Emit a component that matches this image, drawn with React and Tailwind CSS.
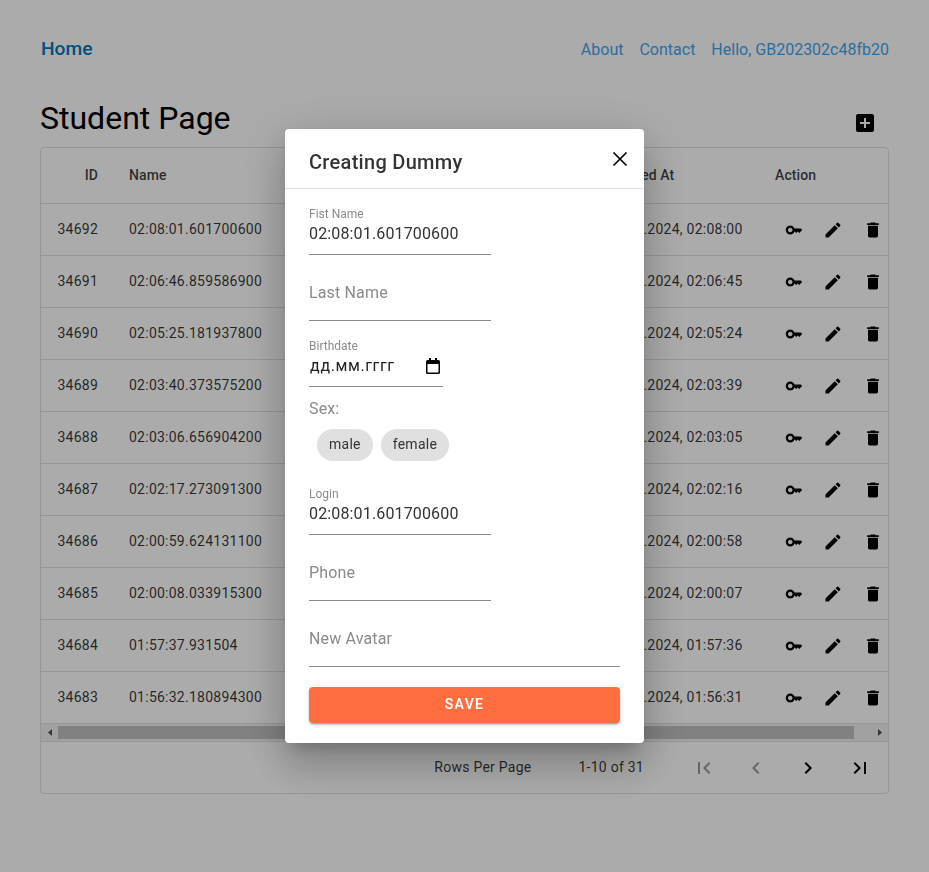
const font = { fontFamily: "Roboto, sans-serif" };

const rows = [
    ["34692", "02:08:01.601700600", "30.01.2024, 02:08:00"],
    ["34691", "02:06:46.859586900", "30.01.2024, 02:06:45"],
    ["34690", "02:05:25.181937800", "30.01.2024, 02:05:24"],
    ["34689", "02:03:40.373575200", "30.01.2024, 02:03:39"],
    ["34688", "02:03:06.656904200", "30.01.2024, 02:03:05"],
    ["34687", "02:02:17.273091300", "30.01.2024, 02:02:16"],
    ["34686", "02:00:59.624131100", "30.01.2024, 02:00:58"],
    ["34685", "02:00:08.033915300", "30.01.2024, 02:00:07"],
    ["34684", "01:57:37.931504", "30.01.2024, 01:57:36"],
    ["34683", "01:56:32.180894300", "30.01.2024, 01:56:31"],
];

const paths = {
    key: "M21 10h-8.35C11.83 7.67 9.61 6 7 6c-3.31 0-6 2.69-6 6s2.69 6 6 6c2.61 0 4.83-1.67 5.65-4H13l2 2 2-2 2 2 4-4.04L21 10zM7 15c-1.65 0-3-1.35-3-3s1.35-3 3-3 3 1.35 3 3-1.35 3-3 3z",
    edit: "M3 17.25V21h3.75L17.81 9.94l-3.75-3.75L3 17.25zM20.71 7.04c.39-.39.39-1.02 0-1.41l-2.34-2.34a.9959.9959 0 0 0-1.41 0l-1.83 1.83 3.75 3.75 1.83-1.83z",
    trash: "M6 19c0 1.1.9 2 2 2h8c1.1 0 2-.9 2-2V7H6v12zM19 4h-3.5l-1-1h-5l-1 1H5v2h14V4z",
    add: "M19 3H5c-1.11 0-2 .9-2 2v14c0 1.1.89 2 2 2h14c1.1 0 2-.9 2-2V5c0-1.1-.9-2-2-2zm-2 10h-4v4h-2v-4H7v-2h4V7h2v4h4v2z",
    first: "M18.41 16.59L13.82 12l4.59-4.59L17 6l-6 6 6 6zM6 6h2v12H6z",
    prev: "M15.41 7.41L14 6l-6 6 6 6 1.41-1.41L10.83 12z",
    next: "M10 6L8.59 7.41 13.17 12l-4.58 4.59L10 18l6-6z",
    last: "M5.59 7.41L10.18 12l-4.59 4.59L7 18l6-6-6-6zM16 6h2v12h-2z",
};

function Icon({ name, className }) {
    return (
        <svg viewBox="0 0 24 24" fill="currentColor" className={className}>
            <path d={paths[name]} />
        </svg>
    );
}

function ActionButton({ name, size = "w-5 h-5" }) {
    return (
        <button className="w-[39.5px] h-10 shrink-0 flex items-center justify-center text-black">
            <Icon name={name} className={size} />
        </button>
    );
}

function PageButton({ name, disabled }) {
    return (
        <button className={`w-[52px] h-10 flex items-center justify-center ${disabled ? "text-black/40" : "text-black"}`}>
            <Icon name={name} className="w-6 h-6" />
        </button>
    );
}

function StudentRow({ row }) {
    return (
        <div className="flex items-center h-[52px] pb-[2px] border-b border-[#e0e0e0] text-sm tracking-[0.25px] text-black/80">
            <div className="w-[72px] pr-[15px] text-right shrink-0">{row[0]}</div>
            <div className="pl-4 w-[478px] shrink-0">{row[1]}</div>
            <div className="pl-4 w-[168px] shrink-0 whitespace-nowrap">{row[2]}</div>
            <div className="flex pl-[14.75px] mt-[3px]">
                <ActionButton name="key" size="w-[18px] h-[18px]" />
                <ActionButton name="edit" />
                <ActionButton name="trash" />
            </div>
        </div>
    );
}

function Field({ label, value, placeholder, width = "w-[182px]" }) {
    return (
        <div className={`${width} h-[66px] border-b border-[#8c8c8c] ${label ? "pt-[17px]" : "pt-[26px]"}`}>
            {label && <div className="text-xs leading-4 text-[#8a8a8a]">{label}</div>}
            <input
                readOnly
                value={value || ""}
                placeholder={placeholder}
                className="block w-full h-6 text-base tracking-[0.15px] text-[#333] outline-none placeholder:text-[#8a8a8a] placeholder:opacity-100"
            />
        </div>
    );
}

function DateField() {
    return (
        <div className="w-[134px] h-[66px] border-b border-[#8c8c8c] pt-[17px]">
            <div className="text-xs leading-4 text-[#8a8a8a]">Birthdate</div>
            <div className="flex items-center justify-between h-6 pl-px pr-[3px]">
                <span className="text-base tracking-[0.6px] text-[#222]">дд.мм.гггг</span>
                <svg viewBox="0 0 14 16" className="w-[14px] h-4">
                    <path d="M3 0h2v2h4V0h2v2h1.5A1.5 1.5 0 0 1 14 3.500V14.500A1.500 1.500 0 0 1 12.500 16h-11A1.500 1.500 0 0 1 0 14.500V3.500A1.500 1.500 0 0 1 1.500 2H3zM1.500 6v8.500h11V6z" fill="#000" fillRule="evenodd" />
                </svg>
            </div>
        </div>
    );
}

function Chip({ label }) {
    return (
        <button className="h-8 px-3 pb-[2px] rounded-2xl bg-[#e0e0e0] text-sm tracking-[0.25px] text-[#333]">
            {label}
        </button>
    );
}

function CreateDialog() {
    return (
        <div className="fixed inset-0 z-10 flex items-center justify-center bg-black/33">
            <div className="w-[359px] h-[614px] bg-white rounded overflow-hidden shadow-[0_11px_15px_-7px_rgba(0,0,0,0.2),0_24px_38px_3px_rgba(0,0,0,0.14),0_9px_46px_8px_rgba(0,0,0,0.12)]">
                <div className="flex justify-between h-[60px] pl-6 pr-3 pt-[19px] border-b border-[#e0e0e0]">
                    <h2 className="text-xl leading-7 font-medium tracking-[0.3px] text-black/80">Creating Dummy</h2>
                    <button className="text-black h-6 -mt-[1px]">
                        <svg viewBox="0 0 24 24" className="w-6 h-6" fill="none" stroke="currentColor" strokeWidth="1.7">
                            <path d="M5.500 5.500l13 13M18.500 5.500l-13 13" />
                        </svg>
                    </button>
                </div>
                <div className="px-6">
                    <Field label="Fist Name" value="02:08:01.601700600" />
                    <Field placeholder="Last Name" />
                    <DateField />
                    <div className="pt-[10px] text-base leading-6 tracking-[0.15px] text-[#8a8a8a]">Sex:</div>
                    <div className="flex gap-2 mt-2 ml-2">
                        <Chip label="male" />
                        <Chip label="female" />
                    </div>
                    <div className="mt-2">
                        <Field label="Login" value="02:08:01.601700600" />
                    </div>
                    <Field placeholder="Phone" />
                    <Field placeholder="New Avatar" width="w-full" />
                    <button className="mt-5 w-full h-9 pb-[2px] rounded bg-[#ff6e40] text-white text-sm font-semibold uppercase tracking-[1.25px] shadow-[0_3px_1px_-2px_rgba(0,0,0,0.2),0_2px_2px_0_rgba(0,0,0,0.14),0_1px_5px_0_rgba(0,0,0,0.12)]">
                        Save
                    </button>
                </div>
            </div>
        </div>
    );
}

export default function App() {
    return (
        <div className="min-h-screen bg-white px-10 pt-[37px] text-black" style={font}>
            <nav className="flex items-center justify-between h-6">
                <a className="text-[19.2px] font-medium text-[#0277bd] pl-px">Home</a>
                <div className="flex gap-4 text-base text-[#3fa5f0] pt-[2px]">
                    <a>About</a>
                    <a>Contact</a>
                    <a>Hello, GB202302c48fb20</a>
                </div>
            </nav>

            <div className="flex justify-between h-[50px] mt-[36px]">
                <h1 className="text-[32px] leading-10 pt-px">Student Page</h1>
                <button className="w-10 h-10 mt-[6px] mr-1 flex items-center justify-center">
                    <Icon name="add" className="w-6 h-6" />
                </button>
            </div>

            <div className="border border-[#e0e0e0] rounded overflow-hidden">
                <div className="flex items-center h-[56px] pb-[2px] border-b border-[#e0e0e0] text-sm font-medium tracking-[0.1px] text-black/75">
                    <div className="w-[72px] pr-[15px] text-right shrink-0">ID</div>
                    <div className="pl-4 w-[478px] shrink-0">Name</div>
                    <div className="pl-4 w-[168px] shrink-0">Created At</div>
                    <div className="pl-4">Action</div>
                </div>

                {rows.map((row) => (
                    <StudentRow key={row[0]} row={row} />
                ))}

                {/* Scrollbar */}
                <div className="flex items-center h-[18px] bg-[#f1f1f1] border-b border-[#e0e0e0]">
                    <div className="w-[17px] flex justify-center">
                        <svg viewBox="0 0 4 7" className="w-1 h-[7px]"><path d="M4 0v7L0 3.500z" fill="#505050" /></svg>
                    </div>
                    <div className="w-[796px] h-[13px] bg-[#c1c1c1]" />
                    <div className="flex-1" />
                    <div className="w-[17px] flex justify-center">
                        <svg viewBox="0 0 4 7" className="w-1 h-[7px]"><path d="M0 0v7l4-3.500z" fill="#505050" /></svg>
                    </div>
                </div>

                <div className="flex items-center justify-end h-[51px] pr-[2px] text-sm tracking-[0.25px] text-black/80">
                    <span className="pb-[2px]">Rows Per Page</span>
                    <span className="ml-[47px] mr-[34px] pb-[2px]">1-10 of 31</span>
                    <PageButton name="first" disabled />
                    <PageButton name="prev" disabled />
                    <PageButton name="next" />
                    <PageButton name="last" />
                </div>
            </div>

            <CreateDialog />
        </div>
    );
}
